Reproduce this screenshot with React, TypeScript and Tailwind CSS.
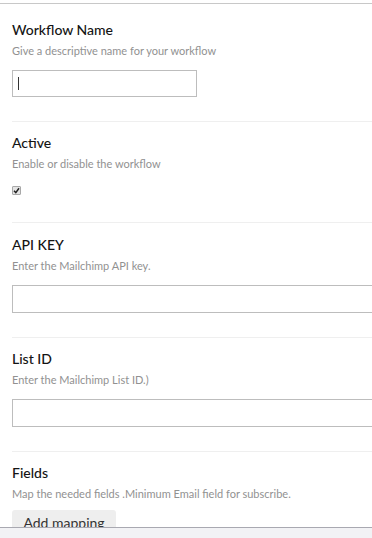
import React from "react";

const font = { fontFamily: "Lato, 'Open Sans', sans-serif" };

function Title({ children }: { children: React.ReactNode }) {
  return <div className="text-[14px] leading-[18px] font-medium text-[#141414]">{children}</div>;
}
function Sub({ children }: { children: React.ReactNode }) {
  return <div className="mt-[5px] text-[11px] leading-[14px] text-[#919191]">{children}</div>;
}

export default function App() {
  return (
    <div className="w-[372px] h-[538px] bg-white flex flex-col overflow-hidden" style={font}>
      <div className="h-[3px] shrink-0 bg-white" />
      <div className="flex-1 min-h-0 overflow-hidden border-t border-[#c8c8c8] pl-[12px]">
        <div className="pt-[17px] pb-[24px] border-b border-[#efefef]">
          <Title>Workflow Name</Title>
          <Sub>Give a descriptive name for your workflow</Sub>
          <div className="mt-[12px] w-[185px] h-[27px] border border-[#bdbdbd] flex items-center pl-[5px]">
            <div className="w-px h-[13px] bg-[#333]" />
          </div>
        </div>
        <div className="pt-[12px] pb-[27px] border-b border-[#efefef]">
          <Title>Active</Title>
          <Sub>Enable or disable the workflow</Sub>
          <div className="mt-[15px] w-[9px] h-[9px] rounded-[1px] border border-[#a8a8a8] bg-[#e4e4e4] flex items-center justify-center">
            <svg width="7" height="7" viewBox="0 0 7 7">
              <path d="M1 3.8 L2.8 5.6 L6 1.2" stroke="#222" strokeWidth="1.5" fill="none" />
            </svg>
          </div>
        </div>
        <div className="pt-[13px] pb-[24px] border-b border-[#efefef]">
          <Title>API KEY</Title>
          <Sub>Enter the Mailchimp API key.</Sub>
          <div className="mt-[12px] w-[420px] h-[28px] border border-[#bdbdbd]" />
        </div>
        <div className="pt-[12px] pb-[24px] border-b border-[#efefef]">
          <Title>List ID</Title>
          <Sub>Enter the Mailchimp List ID.)</Sub>
          <div className="mt-[12px] w-[420px] h-[28px] border border-[#bdbdbd]" />
        </div>
        <div className="pt-[12px]">
          <Title>Fields</Title>
          <Sub>Map the needed fields .Minimum Email field for subscribe.</Sub>
          <button className="mt-[9px] w-[104px] h-[30px] rounded-[3px] bg-[#eeeeee] text-[14px] text-[#333] leading-[18px] pt-[4px] flex justify-center" style={font}>
            Add mapping
          </button>
        </div>
      </div>
      <div className="h-[11px] shrink-0 border-t border-[#a9a9b1] bg-[#f2f2f5]" />
    </div>
  );
}
